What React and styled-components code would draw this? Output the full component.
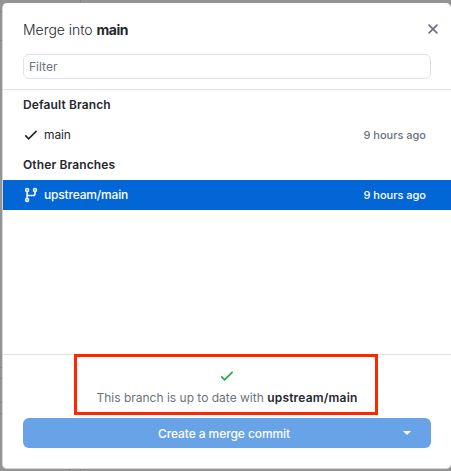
import React from 'react';
import styled, { createGlobalStyle } from 'styled-components';

const GlobalStyle = createGlobalStyle`
  * { box-sizing: border-box; }
  body {
    margin: 0;
    overflow: hidden;
    background: #949494;
    font-family: Inter, "Liberation Sans", sans-serif;
    font-size: 12px;
    color: #24292e;
  }
`;

const Backdrop = styled.div`
  width: 451px;
  height: 471px;
  padding: 3px 0 2px 2px;
  overflow: hidden;
  background:
    linear-gradient(#858689, #858689) 80px 0 / 1px 3px no-repeat,
    linear-gradient(#858689, #858689) 69px 469px / 1px 2px no-repeat,
    linear-gradient(#858689, #858689) 80px 469px / 1px 2px no-repeat,
    linear-gradient(#858689, #858689) 0 11px / 2px 1px no-repeat,
    linear-gradient(#858689, #858689) 0 40px / 2px 1px no-repeat,
    linear-gradient(#858689, #858689) 0 367px / 2px 1px no-repeat,
    linear-gradient(#858689, #858689) 0 378px / 2px 1px no-repeat,
    linear-gradient(#858689, #858689) 0 402px / 2px 1px no-repeat,
    linear-gradient(#858689, #858689) 0 413px / 2px 1px no-repeat,
    #949494;
`;

const Dialog = styled.section`
  width: 449px;
  height: 466px;
  display: flex;
  flex-direction: column;
  background: #fff;
  border-left: 1px solid #d5d6da;
  border-bottom: 1px solid #d5d6da;
  border-radius: 5px;
`;

const Header = styled.header`
  height: 87px;
  padding: 18px 20px 0 20px;
  border-bottom: 1px solid #e1e2e7;
`;

const TitleRow = styled.div`
  height: 18px;
  display: flex;
  align-items: center;
  justify-content: space-between;
`;

const Title = styled.h1`
  margin: 0;
  font-size: 14px;
  line-height: 18px;
  font-weight: 300;
  letter-spacing: -0.03px;
  b { font-weight: 700; letter-spacing: -0.45px; }
`;

const CloseButton = styled.button`
  display: flex;
  padding: 0;
  border: 0;
  margin: -3px -10px 0 0;
  background: none;
  color: #6a737d;
`;

const FilterInput = styled.input`
  display: block;
  width: 408px;
  height: 25px;
  margin-top: 15px;
  padding: 0 5px;
  border: 1px solid #e0e0e9;
  border-radius: 6px;
  outline: 0;
  font: 400 12px Inter, sans-serif;
  &::placeholder { color: #6a737d; opacity: 1; }
`;

const BranchList = styled.main`
  flex: 1;
`;

const GroupHeading = styled.h2`
  height: 30px;
  margin: 0;
  padding-left: 20px;
  font-size: 12px;
  line-height: 30px;
  font-weight: 600;
  letter-spacing: 0.12px;
`;

const BranchRow = styled.div`
  height: 30px;
  padding: 0 25px 0 20px;
  display: flex;
  align-items: center;
  color: ${({ $selected }) => ($selected ? '#fff' : '#24292e')};
  background: ${({ $selected }) => ($selected ? '#0366d6' : 'transparent')};
`;

const RowIcon = styled.span`
  width: 21px;
  display: flex;
`;

const BranchName = styled.span`
  flex: 1;
  padding-bottom: 1px;
  font-weight: ${({ $selected }) => ($selected ? 500 : 400)};
  letter-spacing: ${({ $selected }) => ($selected ? '-0.18px' : '-0.1px')};
`;

const BranchTime = styled.time`
  font-size: 11px;
  font-weight: 500;
  color: ${({ $selected }) => ($selected ? '#fff' : '#6a737d')};
`;

const Footer = styled.footer`
  height: 114px;
  border-top: 1px solid #e1e2e7;
  padding: 0 20px;
`;

const StatusCallout = styled.div`
  position: relative;
  width: 304px;
  height: 61px;
  margin: -1px 0 0 51px;
  padding: 11px 0 0 2px;
  display: flex;
  flex-direction: column;
  align-items: center;
  border: 3px solid #ff2600;
  color: #6a737d;
`;

const StatusText = styled.p`
  margin: 6px 0 0;
  line-height: 16px;
  white-space: nowrap;
  strong { color: #24292e; font-weight: 600; letter-spacing: 0.2px; }
`;

const MergeButtons = styled.div`
  height: 30px;
  margin-top: 3px;
  display: flex;
  border-radius: 6px;
  overflow: hidden;
`;

const MergeButton = styled.button`
  flex: 1;
  padding: 0;
  border: 0;
  background: #68a3e7;
  color: #fff;
  font: 500 12px Inter, sans-serif;
`;

const MergeAction = styled(MergeButton)`
  padding: 0 0 0 43px;
  letter-spacing: -0.08px;
`;

const MergeMenuButton = styled(MergeButton)`
  flex: 0 0 49px;
  display: flex;
  align-items: center;
  justify-content: center;
`;

const Check = ({ color = 'currentColor' }) => (
  <svg width="16" height="16" viewBox="0 0 16 16" fill="none" stroke={color} strokeWidth="1.7" strokeLinecap="round">
    <path d="m2.7 8.9 2.9 2.9 7.5-7.5" />
  </svg>
);

const BranchIcon = () => (
  <svg width="16" height="16" viewBox="0 0 16 16" fill="none" stroke="currentColor" strokeWidth="1.5">
    <circle cx="4.1" cy="3" r="1.5" />
    <circle cx="4.1" cy="13" r="1.5" />
    <circle cx="12" cy="3" r="1.5" />
    <path d="M4.1 4.5v7M4.1 8.5h6Q12 8.5 12 6.7V4.5" />
  </svg>
);

export default function App() {
  return (
    <>
      <GlobalStyle />
      <Backdrop>
        <Dialog>
          <Header>
            <TitleRow>
              <Title>Merge into <b>main</b></Title>
              <CloseButton aria-label="Close">
                <svg width="16" height="16" viewBox="0 0 16 16" fill="none" stroke="currentColor" strokeWidth="1.7" strokeLinecap="round">
                  <path d="m4.1 4.1 7.8 7.8M11.9 4.1l-7.8 7.8" />
                </svg>
              </CloseButton>
            </TitleRow>
            <FilterInput placeholder="Filter" />
          </Header>
          <BranchList>
            <GroupHeading>Default Branch</GroupHeading>
            <BranchRow>
              <RowIcon><Check /></RowIcon>
              <BranchName>main</BranchName>
              <BranchTime>9 hours ago</BranchTime>
            </BranchRow>
            <GroupHeading>Other Branches</GroupHeading>
            <BranchRow $selected>
              <RowIcon><BranchIcon /></RowIcon>
              <BranchName $selected>upstream/main</BranchName>
              <BranchTime $selected>9 hours ago</BranchTime>
            </BranchRow>
          </BranchList>
          <Footer>
            <StatusCallout>
              <Check color="#28a745" />
              <StatusText>This branch is up to date with <strong>upstream/main</strong></StatusText>
            </StatusCallout>
            <MergeButtons>
              <MergeAction>Create a merge commit</MergeAction>
              <MergeMenuButton aria-label="Merge options">
                <svg width="8" height="4" viewBox="0 0 8 4" fill="currentColor"><path d="M0 0h8L4 4z" /></svg>
              </MergeMenuButton>
            </MergeButtons>
          </Footer>
        </Dialog>
      </Backdrop>
    </>
  );
}
